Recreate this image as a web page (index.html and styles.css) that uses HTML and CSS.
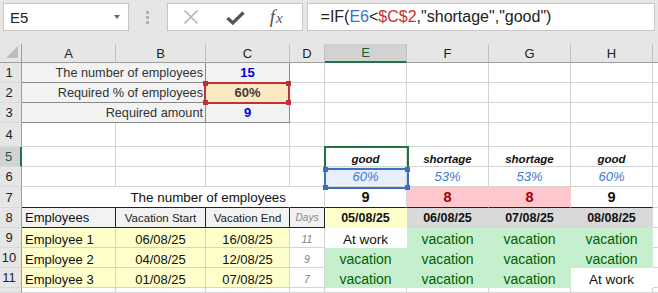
FILE: index.html
```html
<!DOCTYPE html>
<html>
<head>
<meta charset="utf-8">
<link rel="stylesheet" href="styles.css">
</head>
<body>
<div class="toolbar">
  <div class="namebox"><span class="nb-text">E5</span><span class="nb-arrow"></span></div>
  <div class="grip"><i></i><i></i><i></i></div>
  <div class="btns">
    <svg class="ic-x" width="16" height="16" viewBox="0 0 16 16"><path d="M1.5 1.5 L14.5 14.5 M14.5 1.5 L1.5 14.5" stroke="#b4b4b4" stroke-width="1.6" fill="none"/></svg>
    <svg class="ic-ok" width="19" height="14" viewBox="0 0 19 14"><path d="M1.5 7 L6.8 12 L17.5 1.5" stroke="#555" stroke-width="3.2" fill="none" stroke-linejoin="miter"/></svg>
    <span class="fx"><span class="fx-f">f</span><span class="fx-x">x</span></span>
  </div>
  <div class="formula">=IF(<span class="ref-b">E6</span>&lt;<span class="ref-r">$C$2</span>,"shortage","good")</div>
</div>
<div class="sheet">
  <!-- header row -->
  <div class="corner"><svg width="12" height="12" viewBox="0 0 12 12"><polygon points="12,0 12,12 0,12" fill="#bdbdbd"/></svg></div>
  <div class="h">A</div><div class="h">B</div><div class="h">C</div><div class="h">D</div>
  <div class="h sel">E</div><div class="h">F</div><div class="h">G</div><div class="h">H</div><div class="h"></div>

  <!-- row 1 -->
  <div class="r">1</div>
  <div class="c span2 box lbl">The number of employees</div>
  <div class="c box gray ctr num-blue">15</div>
  <div class="c"></div><div class="c"></div><div class="c"></div><div class="c"></div><div class="c"></div><div class="c"></div>

  <!-- row 2 -->
  <div class="r">2</div>
  <div class="c span2 box lbl">Required % of employees</div>
  <div class="c box beige ctr num-gray">60%</div>
  <div class="c"></div><div class="c"></div><div class="c"></div><div class="c"></div><div class="c"></div><div class="c"></div>

  <!-- row 3 -->
  <div class="r">3</div>
  <div class="c span2 box lbl">Required amount</div>
  <div class="c box gray ctr num-blue">9</div>
  <div class="c"></div><div class="c"></div><div class="c"></div><div class="c"></div><div class="c"></div><div class="c"></div>

  <!-- row 4 -->
  <div class="r">4</div>
  <div class="c"></div><div class="c"></div><div class="c"></div><div class="c"></div><div class="c"></div><div class="c"></div><div class="c"></div><div class="c"></div><div class="c"></div>

  <!-- row 5 -->
  <div class="r sel">5</div>
  <div class="c"></div><div class="c"></div><div class="c"></div><div class="c"></div>
  <div class="c ctr st">good</div><div class="c ctr st">shortage</div><div class="c ctr st">shortage</div><div class="c ctr st">good</div><div class="c"></div>

  <!-- row 6 -->
  <div class="r">6</div>
  <div class="c"></div><div class="c"></div><div class="c"></div><div class="c"></div>
  <div class="c ctr pct lightblue">60%</div><div class="c ctr pct">53%</div><div class="c ctr pct">53%</div><div class="c ctr pct">60%</div><div class="c"></div>

  <!-- row 7 -->
  <div class="r">7</div>
  <div class="c span3 r7lbl bb">The number of employees</div>
  <div class="c bb"></div>
  <div class="c ctr cnt bb">9</div>
  <div class="c ctr cnt bad bb">8</div>
  <div class="c ctr cnt bad bb">8</div>
  <div class="c ctr cnt bb">9</div>
  <div class="c"></div>

  <!-- row 8 -->
  <div class="r">8</div>
  <div class="c hdr8 name">Employees</div>
  <div class="c hdr8 ctr vac">Vacation Start</div>
  <div class="c hdr8 ctr vac">Vacation End</div>
  <div class="c hdr8 ctr days">Days</div>
  <div class="c ctr date today">05/08/25</div>
  <div class="c ctr date grayd">06/08/25</div>
  <div class="c ctr date grayd">07/08/25</div>
  <div class="c ctr date grayd">08/08/25</div>
  <div class="c"></div>

  <!-- row 9 -->
  <div class="r">9</div>
  <div class="c y name emp">Employee 1</div>
  <div class="c y ctr emp">06/08/25</div>
  <div class="c y ctr emp">16/08/25</div>
  <div class="c ctr dn">11</div>
  <div class="c ctr st9 work">At work</div>
  <div class="c ctr st9 vacn">vacation</div>
  <div class="c ctr st9 vacn">vacation</div>
  <div class="c ctr st9 vacn">vacation</div>
  <div class="c"></div>

  <!-- row 10 -->
  <div class="r">10</div>
  <div class="c y name emp">Employee 2</div>
  <div class="c y ctr emp">04/08/25</div>
  <div class="c y ctr emp">12/08/25</div>
  <div class="c ctr dn">9</div>
  <div class="c ctr st9 vacn">vacation</div>
  <div class="c ctr st9 vacn">vacation</div>
  <div class="c ctr st9 vacn">vacation</div>
  <div class="c ctr st9 vacn">vacation</div>
  <div class="c"></div>

  <!-- row 11 -->
  <div class="r">11</div>
  <div class="c y name emp">Employee 3</div>
  <div class="c y ctr emp">01/08/25</div>
  <div class="c y ctr emp">07/08/25</div>
  <div class="c ctr dn">7</div>
  <div class="c ctr st9 vacn">vacation</div>
  <div class="c ctr st9 vacn">vacation</div>
  <div class="c ctr st9 vacn">vacation</div>
  <div class="c ctr st9 work">At work</div>
  <div class="c"></div>

  <!-- row 12 -->
  <div class="r"></div>
  <div class="c"></div><div class="c"></div><div class="c"></div><div class="c"></div><div class="c"></div><div class="c"></div><div class="c"></div><div class="c"></div><div class="c"></div>

  <!-- overlays -->
  <div class="selbox"></div>
  <div class="refbox blue"><i class="hd tl"></i><i class="hd tr"></i><i class="hd bl"></i><i class="hd br"></i></div>
  <div class="refbox red"><i class="hd tl"></i><i class="hd tr"></i><i class="hd bl"></i><i class="hd br"></i></div>
</div>
</body>
</html>
```
FILE: styles.css
```css
html, body {
  margin: 0;
  padding: 0;
}
body {
  width: 658px;
  height: 293px;
  overflow: hidden;
  background: #fff;
  font-family: "Liberation Sans", Arial, sans-serif;
  color: #111;
}

/* ---------- formula bar ---------- */
.toolbar {
  height: 44px;
  box-sizing: border-box;
  padding: 3px 3px 0 3px;
  background: #e6e6e6;
  display: flex;
  align-items: flex-start;
}
.namebox {
  width: 126px;
  height: 28px;
  box-sizing: border-box;
  background: #fff;
  border: 1px solid #c6c6c6;
  display: flex;
  align-items: center;
  padding-left: 6px;
  position: relative;
}
.nb-text {
  font-size: 15px;
  color: #222;
  flex: 1;
}
.nb-arrow {
  width: 0;
  height: 0;
  border-left: 3.5px solid transparent;
  border-right: 3.5px solid transparent;
  border-top: 4px solid #666;
  margin-right: 8px;
}
.grip {
  width: 38px;
  height: 28px;
  display: flex;
  flex-direction: column;
  align-items: center;
  justify-content: center;
  gap: 2px;
}
.grip i {
  display: block;
  width: 3px;
  height: 3px;
  background: #b0b0b0;
}
.btns {
  width: 136px;
  height: 28px;
  box-sizing: border-box;
  background: #fff;
  border: 1px solid #c6c6c6;
  display: flex;
  align-items: center;
  padding-left: 15px;
}
.ic-x { margin-right: 27px; }
.ic-ok { margin-right: 25px; margin-top: 1px; }
.fx {
  font-family: "Liberation Serif", "Times New Roman", serif;
  font-style: italic;
  color: #555;
  display: flex;
  align-items: baseline;
}
.fx-f { font-size: 19px; }
.fx-x { font-size: 15px; margin-left: 1px; }
.formula {
  margin-left: 4px;
  width: 349px;
  height: 28px;
  box-sizing: border-box;
  background: #fff;
  border: 1px solid #c6c6c6;
  font-size: 16px;
  color: #222;
  padding-left: 13px;
  display: flex;
  align-items: center;
  white-space: nowrap;
}
.ref-b { color: #3b6fc6; }
.ref-r { color: #c0303a; }

/* ---------- sheet ---------- */
.sheet {
  position: relative;
  height: 249px;
  overflow: hidden;
  display: grid;
  grid-template-columns: 22px 94px 90px 84px 35px 82px 82px 82px 82px 1fr;
  grid-template-rows: 19px 20px 20px 20px 24px 20px 20px 21px 20px 20px 20px 20px 1fr;
  background: #fff;
}
.corner {
  background: #e6e6e6;
  border-right: 1px solid #9e9e9e;
  border-bottom: 1px solid #9e9e9e;
  box-sizing: border-box;
  display: flex;
  align-items: flex-end;
  justify-content: flex-end;
  padding: 0 3px 4px 0;
}
.h {
  background: #e6e6e6;
  border-right: 1px solid #c0c0c0;
  border-bottom: 1px solid #9e9e9e;
  box-sizing: border-box;
  display: flex;
  align-items: center;
  justify-content: center;
  font-size: 13px;
  color: #222;
}
.h.sel {
  background: #d2d2d2;
  border-bottom: 2px solid #217346;
  color: #185c37;
}
.r {
  background: #e6e6e6;
  border-right: 1px solid #9e9e9e;
  border-bottom: 1px solid #dadada;
  box-sizing: border-box;
  display: flex;
  align-items: center;
  justify-content: center;
  padding-right: 3px;
  font-size: 13px;
  color: #222;
}
.r.sel {
  background: #d2d2d2;
  border-right: 2px solid #217346;
  color: #185c37;
}
.c {
  border-right: 1px solid #d4d4d4;
  border-bottom: 1px solid #d4d4d4;
  box-sizing: border-box;
  display: flex;
  align-items: center;
  padding: 0 3px;
  font-size: 13px;
  white-space: nowrap;
  min-width: 0;
}
.ctr { justify-content: center; }
.span2 { grid-column: span 2; }
.span3 { grid-column: span 3; }

/* rows 1-3 block */
.box {
  background: #f2f2f2;
  border-right-color: #8a8a8a;
  border-bottom-color: #8a8a8a;
}
.lbl {
  justify-content: flex-end;
  padding-right: 2px;
  font-size: 12.7px;
  color: #333;
}
.gray { background: #f2f2f2; }
.beige { background: #fce9c2; }
.num-blue { font-weight: bold; color: #0000d8; }
.num-gray { font-weight: bold; color: #404040; }

/* rows 5-7 */
.st {
  font-size: 11.5px;
  font-weight: bold;
  font-style: italic;
  color: #111;
  padding-top: 4px;
}
.pct {
  font-style: italic;
  color: #3a7bd5;
}
.lightblue { background: #e8effa; }
.r7lbl {
  justify-content: flex-end;
  padding-right: 3px;
  font-size: 13.4px;
  color: #111;
  border-right-color: transparent;
}
.bb { border-bottom-color: #222; }
.cnt {
  font-size: 14.5px;
  font-weight: bold;
  color: #111;
}
.bad {
  background: #ffc7ce;
  color: #9c0006;
  border-right-color: transparent;
}

/* row 8 */
.hdr8 {
  background: #f2f2f2;
  border-right-color: #222;
  border-bottom-color: #222;
}
.name { justify-content: flex-start; }
.vac { font-size: 11.5px; color: #222; }
.days { font-size: 10px; font-style: italic; color: #888; }
.date {
  font-size: 12.5px;
  font-weight: bold;
  color: #111;
  border-right-color: transparent;
  border-bottom-color: transparent;
}
.today { background: #ffffcc; }
.grayd { background: #d9d9d9; }

/* rows 9-11 */
.y { background: #ffffcc; }
.emp { color: #111; padding-top: 3px; }
.dn { font-size: 10.5px; font-style: italic; color: #808080; padding-top: 3px; }
.st9 {
  font-size: 14px;
  border-right-color: transparent;
  border-bottom-color: transparent;
  padding-top: 3px;
}
.work { background: #fff; color: #111; font-size: 13.5px; }
.vacn { background: #c6efce; color: #006100; }

/* ---------- overlays ---------- */
.selbox {
  position: absolute;
  left: 324px;
  top: 102px;
  width: 85px;
  height: 24px;
  box-sizing: border-box;
  border: 2px solid #217346;
}
.refbox {
  position: absolute;
  box-sizing: border-box;
  border: 2px solid;
}
.refbox.blue {
  left: 324px;
  top: 124px;
  width: 85px;
  height: 21px;
  border-color: #3b6fc6;
}
.refbox.red {
  left: 204px;
  top: 38px;
  width: 86px;
  height: 22px;
  border-color: #c0303a;
}
.hd {
  position: absolute;
  width: 5px;
  height: 5px;
}
.blue .hd { background: #3b6fc6; }
.red .hd { background: #c0303a; }
.hd.tl { left: -3px; top: -3px; }
.hd.tr { right: -3px; top: -3px; }
.hd.bl { left: -3px; bottom: -3px; }
.hd.br { right: -3px; bottom: -3px; }
```
